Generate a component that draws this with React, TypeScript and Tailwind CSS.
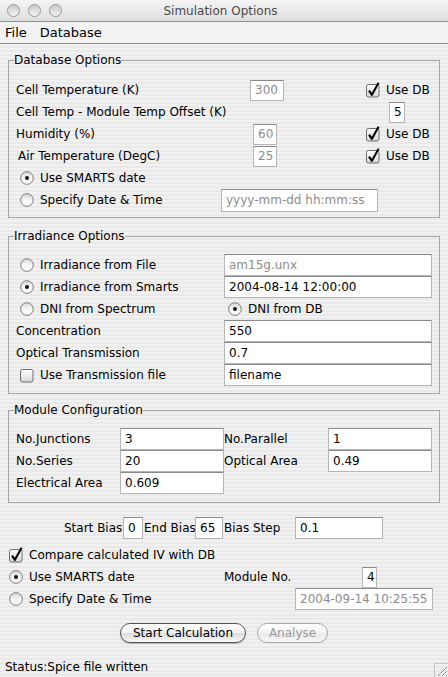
import React from "react";

type FieldProps = {
  className: string;
  value: string;
  disabled?: boolean;
};

function Field({ className, value, disabled }: FieldProps) {
  return (
    <div
      className={`flex items-center overflow-hidden whitespace-nowrap border border-[#b5b5b5] border-t-[#8a8a8a] bg-white pl-[4px] ${
        disabled ? "text-[#8c8c8c]" : "text-black"
      } ${className}`}
    >
      {value}
    </div>
  );
}

function Check({ checked }: { checked?: boolean }) {
  return (
    <svg width="14" height="16" viewBox="0 0 14 16" className="shrink-0">
      <defs>
        <linearGradient id="cbg" x1="0" y1="0" x2="0" y2="1">
          <stop offset="0" stopColor="#ffffff" />
          <stop offset="1" stopColor="#d6d6d6" />
        </linearGradient>
      </defs>
      <rect x="0.5" y="2.5" width="12.5" height="12.5" rx="2" fill="url(#cbg)" stroke="#6f6f6f" />
      {checked && (
        <path d="M3 8.6 L5.9 12.8 L12.6 0.8" fill="none" stroke="#000" strokeWidth="2.1" strokeLinejoin="round" />
      )}
    </svg>
  );
}

function Radio({ on }: { on?: boolean }) {
  return (
    <svg width="14" height="14" viewBox="0 0 14 14" className="shrink-0">
      <defs>
        <linearGradient id="rbg" x1="0" y1="0" x2="0" y2="1">
          <stop offset="0" stopColor="#d4d4d4" />
          <stop offset="0.5" stopColor="#f6f6f6" />
          <stop offset="1" stopColor="#ffffff" />
        </linearGradient>
      </defs>
      <circle cx="7" cy="7" r="6.3" fill="url(#rbg)" stroke="#6f6f6f" strokeWidth="0.9" />
      {on && <circle cx="7" cy="7" r="2" fill="#111" />}
    </svg>
  );
}

function Light() {
  return (
    <div className="h-[13px] w-[13px] rounded-full border border-[#9a9a9a] bg-[linear-gradient(180deg,#c9c9c9,#f4f4f4)]" />
  );
}

const row = "flex h-[22px] items-center whitespace-nowrap";

export default function App() {
  return (
    <div className="relative h-[677px] w-[448px] overflow-hidden bg-[repeating-linear-gradient(180deg,#f1f1f1_0px,#f1f1f1_2px,#e9e9e9_2px,#e9e9e9_4px)] font-['DejaVu_Sans',sans-serif] text-[12px] text-black">
      {/* Title bar */}
      <div className="relative flex h-[22px] items-center border-b border-[#8f8f8f] bg-[linear-gradient(180deg,#f4f4f4,#dedede)]">
        <div className="ml-[7px] flex gap-[8px]">
          <Light />
          <Light />
          <Light />
        </div>
        <div className="flex-1 pr-[69px] text-center text-[12px] text-[#4a4a4a]">Simulation Options</div>
      </div>

      {/* Menu bar */}
      <div className="flex h-[22px] items-center gap-[13px] border-b border-[#8f8f8f] bg-[#f2f2f2] pl-[5px] text-[13px]">
        <span>File</span>
        <span>Database</span>
      </div>

      {/* Database Options */}
      <fieldset className="mx-[8px] mt-[9px] border border-[#a6a6a6] pb-[6px] pt-[12px]">
        <legend className="ml-[5px] text-[12px] leading-[14px]">Database Options</legend>
        <div className={`${row} pl-[7px]`}>
          <span className="w-[234px]">Cell Temperature (K)</span>
          <Field className="h-[21px] w-[34px]" value="300" disabled />
          <span className="ml-[82px]">
            <Check checked />
          </span>
          <span className="ml-[6px]">Use DB</span>
        </div>
        <div className={`${row} pl-[7px]`}>
          <span className="w-[373px]">Cell Temp - Module Temp Offset (K)</span>
          <Field className="h-[21px] w-[16px]" value="5" />
        </div>
        <div className={`${row} pl-[7px]`}>
          <span className="w-[237px]">Humidity (%)</span>
          <Field className="h-[21px] w-[24px]" value="60" disabled />
          <span className="ml-[89px]">
            <Check checked />
          </span>
          <span className="ml-[6px]">Use DB</span>
        </div>
        <div className={`${row} pl-[9px]`}>
          <span className="w-[235px]">Air Temperature (DegC)</span>
          <Field className="h-[21px] w-[24px]" value="25" disabled />
          <span className="ml-[89px]">
            <Check checked />
          </span>
          <span className="ml-[6px]">Use DB</span>
        </div>
        <div className={`${row} pl-[11px]`}>
          <Radio on />
          <span className="ml-[6px]">Use SMARTS date</span>
        </div>
        <div className={`${row} pl-[11px]`}>
          <Radio />
          <span className="ml-[6px] w-[181px]">Specify Date &amp; Time</span>
          <Field className="h-[23px] w-[157px]" value="yyyy-mm-dd hh:mm:ss" disabled />
        </div>
      </fieldset>

      {/* Irradiance Options */}
      <fieldset className="mx-[8px] mt-[11px] border border-[#a6a6a6] pb-[7px] pt-[11px]">
        <legend className="ml-[5px] text-[12px] leading-[14px]">Irradiance Options</legend>
        <div className={`${row} pl-[11px]`}>
          <Radio />
          <span className="ml-[6px] w-[184px]">Irradiance from File</span>
          <Field className="h-[22px] w-[208px]" value="am15g.unx" disabled />
        </div>
        <div className={`${row} pl-[11px]`}>
          <Radio on />
          <span className="ml-[6px] w-[184px]">Irradiance from Smarts</span>
          <Field className="h-[22px] w-[208px]" value="2004-08-14 12:00:00" />
        </div>
        <div className={`${row} pl-[11px]`}>
          <Radio />
          <span className="ml-[6px] w-[188px]">DNI from Spectrum</span>
          <Radio on />
          <span className="ml-[6px]">DNI from DB</span>
        </div>
        <div className={`${row} pl-[7px]`}>
          <span className="w-[208px]">Concentration</span>
          <Field className="h-[22px] w-[208px]" value="550" />
        </div>
        <div className={`${row} pl-[7px]`}>
          <span className="w-[208px]">Optical Transmission</span>
          <Field className="h-[22px] w-[208px]" value="0.7" />
        </div>
        <div className={`${row} pl-[11px]`}>
          <Check />
          <span className="ml-[6px] w-[184px]">Use Transmission file</span>
          <Field className="h-[22px] w-[208px]" value="filename" />
        </div>
      </fieldset>

      {/* Module Configuration */}
      <fieldset className="mx-[8px] mt-[9px] border border-[#a6a6a6] pb-[8px] pt-[11px]">
        <legend className="ml-[5px] text-[12px] leading-[14px]">Module Configuration</legend>
        <div className={`${row} pl-[7px]`}>
          <span className="w-[104px]">No.Junctions</span>
          <Field className="h-[22px] w-[104px]" value="3" />
          <span className="w-[104px]">No.Parallel</span>
          <Field className="h-[22px] w-[104px]" value="1" />
        </div>
        <div className={`${row} pl-[7px]`}>
          <span className="w-[104px]">No.Series</span>
          <Field className="h-[22px] w-[104px]" value="20" />
          <span className="w-[104px]">Optical Area</span>
          <Field className="h-[22px] w-[104px]" value="0.49" />
        </div>
        <div className={`${row} pl-[7px]`}>
          <span className="w-[104px]">Electrical Area</span>
          <Field className="h-[22px] w-[104px]" value="0.609" />
        </div>
      </fieldset>

      {/* Bias */}
      <div className={`${row} mt-[14px] pl-[64px]`}>
        <span className="w-[59px]">Start Bias</span>
        <Field className="h-[22px] w-[20px]" value="0" />
        <span className="ml-[1px] w-[51px]">End Bias</span>
        <Field className="h-[22px] w-[28px]" value="65" />
        <span className="ml-[1px] w-[71px]">Bias Step</span>
        <Field className="h-[22px] w-[88px]" value="0.1" />
      </div>

      <div className={`${row} mt-[5px] pl-[9px]`}>
        <Check checked />
        <span className="ml-[6px]">Compare calculated IV with DB</span>
      </div>
      <div className={`${row} pl-[9px]`}>
        <Radio on />
        <span className="ml-[6px] w-[195px]">Use SMARTS date</span>
        <span className="w-[138px]">Module No.</span>
        <Field className="h-[21px] w-[15px]" value="4" />
      </div>
      <div className={`${row} pl-[9px]`}>
        <Radio />
        <span className="ml-[6px] w-[266px]">Specify Date &amp; Time</span>
        <Field className="h-[22px] w-[138px]" value="2004-09-14 10:25:55" disabled />
      </div>

      {/* Buttons */}
      <div className="mt-[13px] flex pl-[120px]">
        <button className="flex h-[20px] w-[126px] items-center justify-center rounded-full border border-[#555] bg-[linear-gradient(180deg,#ffffff,#f0f0f0_50%,#dcdcdc_51%,#f7f7f7)] text-[12px] text-black shadow-[0_1px_1px_rgba(0,0,0,0.25)]">
          Start Calculation
        </button>
        <button
          disabled
          className="ml-[11px] flex h-[20px] w-[71px] items-center justify-center rounded-full border border-[#a8a8a8] bg-[linear-gradient(180deg,#ffffff,#f4f4f4_50%,#e8e8e8_51%,#f8f8f8)] text-[12px] text-[#9a9a9a]"
        >
          Analyse
        </button>
      </div>

      {/* Status */}
      <div className={`${row} mt-[13px] h-[18px] pl-[5px]`}>Status:Spice file written</div>

      {/* Resize grip */}
      <svg className="absolute bottom-0 right-0" width="14" height="14" viewBox="0 0 14 14">
        <rect x="0.5" y="0.5" width="14" height="14" fill="none" stroke="#c4c4c4" />
        <path d="M4 13 L13 4 M8 13 L13 8 M12 13 L13 12" stroke="#8a8a8a" strokeWidth="1" />
        <path d="M5 13 L13 5 M9 13 L13 9" stroke="#ffffff" strokeWidth="1" />
      </svg>
    </div>
  );
}
